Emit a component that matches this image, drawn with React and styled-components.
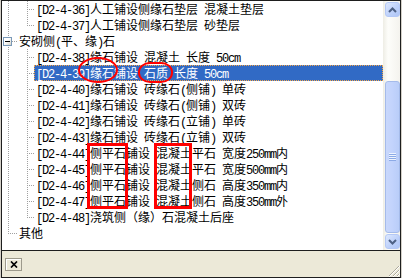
import React from "react";
import styled, { createGlobalStyle, css } from "styled-components";

const GlobalStyle = createGlobalStyle`
  html, body {
    margin: 0;
    padding: 0;
    background: #d4d0c8;
  }
  body {
    width: 402px;
    height: 278px;
    overflow: hidden;
  }
`;

const rows = [
  { guides: [{ v: "full" }, { v: "full", h: true }], text: "[D2-4-36]人工铺设侧缘石垫层 混凝土垫层" },
  { guides: [{ v: "full" }, { v: "end", h: true }], text: "[D2-4-37]人工铺设侧缘石垫层 砂垫层" },
  { guides: [{ v: "full", h: true, box: true }], text: "安砌侧(平、缘)石" },
  { guides: [{ v: "full" }, { v: "full", h: true }], text: "[D2-4-38]缘石铺设 混凝土 长度 50cm" },
  { guides: [{ v: "full" }, { v: "full", h: true }], text: "[D2-4-39]缘石铺设 石质 长度 50cm", selected: true },
  { guides: [{ v: "full" }, { v: "full", h: true }], text: "[D2-4-40]缘石铺设 砖缘石(侧铺) 单砖" },
  { guides: [{ v: "full" }, { v: "full", h: true }], text: "[D2-4-41]缘石铺设 砖缘石(侧铺) 双砖" },
  { guides: [{ v: "full" }, { v: "full", h: true }], text: "[D2-4-42]缘石铺设 砖缘石(立铺) 单砖" },
  { guides: [{ v: "full" }, { v: "full", h: true }], text: "[D2-4-43]缘石铺设 砖缘石(立铺) 双砖" },
  { guides: [{ v: "full" }, { v: "full", h: true }], text: "[D2-4-44]侧平石铺设 混凝土平石 宽度250mm内" },
  { guides: [{ v: "full" }, { v: "full", h: true }], text: "[D2-4-45]侧平石铺设 混凝土平石 宽度500mm内" },
  { guides: [{ v: "full" }, { v: "full", h: true }], text: "[D2-4-46]侧平石铺设 混凝土侧石 高度350mm内" },
  { guides: [{ v: "full" }, { v: "full", h: true }], text: "[D2-4-47]侧平石铺设 混凝土侧石 高度350mm外" },
  { guides: [{ v: "full" }, { v: "end", h: true }], text: "[D2-4-48]浇筑侧（缘）石混凝土后座" },
  { guides: [{ v: "end", h: true }], text: "其他" },
];

// guide column widths and where the dotted line sits inside them
const cols = [
  { w: 15, x: 6 },
  { w: 17, x: 10 },
];

const marks = [
  { x: 76, y: 56, w: 40, h: 26, round: "50%" },
  { x: 136, y: 61, w: 35, h: 21, round: "12px / 10px" },
  { x: 85, y: 142, w: 41, h: 66 },
  { x: 152, y: 142, w: 38, h: 66 },
];

const splitText = (text) =>
  text.split(/([\x20-\x7e]+)/).map((part, i) =>
    /[\x20-\x7e]/.test(part) ? <Latin key={i}>{part}</Latin> : part
  );

const App = () => {
  return (
    <React.Fragment>
      <GlobalStyle />
      <Frame>
        <ListArea>
          <Tree>
            {rows.map((row, i) => (
              <Row key={i}>
                {row.guides.map((g, j) => (
                  <Guide key={j} $w={cols[j].w} $x={cols[j].x} $v={g.v} $h={g.h}>
                    {g.box && <Expander />}
                  </Guide>
                ))}
                <Label $selected={row.selected}>{splitText(row.text)}</Label>
              </Row>
            ))}
            {marks.map((m, i) => (
              <Mark key={i} $x={m.x} $y={m.y} $w={m.w} $h={m.h} $round={m.round} />
            ))}
          </Tree>
          <ScrollBar>
            <ScrollButton>
              <ButtonFace>
                <svg width="9" height="6" viewBox="0 0 9 6">
                  <polyline points="1,5 4.5,1.5 8,5" fill="none" stroke="#4d6185" strokeWidth="2" />
                </svg>
              </ButtonFace>
            </ScrollButton>
            <Track>
              <Thumb style={{ height: 152 }}>
                <svg width="7" height="8" viewBox="0 0 7 8">
                  {[0, 2, 4, 6].map((y) => (
                    <rect key={y} x="0" y={y} width="7" height="1" fill="#eef4fe" />
                  ))}
                  {[1, 3, 5, 7].map((y) => (
                    <rect key={y} x="0" y={y} width="7" height="1" fill="#8caae6" />
                  ))}
                </svg>
              </Thumb>
            </Track>
            <ScrollButton>
              <ButtonFace>
                <svg width="9" height="6" viewBox="0 0 9 6">
                  <polyline points="1,1 4.5,4.5 8,1" fill="none" stroke="#4d6185" strokeWidth="2" />
                </svg>
              </ButtonFace>
            </ScrollButton>
          </ScrollBar>
        </ListArea>
        <Panel>
          <CloseButton>
            <svg width="8" height="7" viewBox="0 0 8 7">
              <path d="M1 0.5 L7 6.5 M7 0.5 L1 6.5" stroke="#000" strokeWidth="1.7" />
            </svg>
          </CloseButton>
          <Grip>
            <svg width="12" height="12" viewBox="0 0 12 12">
              <path d="M11 1 L1 11 M11 5 L5 11 M11 9 L9 11" stroke="#aca899" strokeWidth="1" />
              <path d="M12 1 L1 12 M12 5 L5 12 M12 9 L9 12" stroke="#fff" strokeWidth="1" />
            </svg>
          </Grip>
        </Panel>
      </Frame>
    </React.Fragment>
  );
};

const Frame = styled.div`
  margin-left: 1px;
  width: 400px;
  height: 278px;
  box-sizing: border-box;
  border: 1px solid #1e1e1e;
  display: flex;
  flex-direction: column;
  background: #ece9d8;
`;

const ListArea = styled.div`
  display: flex;
  height: 249px;
  flex: none;
  border-bottom: 1px solid #1e1e1e;
  background: #fff;
`;

const Tree = styled.div`
  position: relative;
  flex: 1;
  overflow: hidden;
  font-family: "Noto Sans CJK SC", sans-serif;
  font-size: 12px;
  color: #000;
`;

const Row = styled.div`
  display: flex;
  height: 16px;
`;

const Guide = styled.div`
  position: relative;
  flex: none;
  width: ${(p) => p.$w}px;

  &::before {
    content: "";
    display: ${(p) => (p.$v === "none" ? "none" : "block")};
    position: absolute;
    left: ${(p) => p.$x}px;
    top: 0;
    width: 1px;
    height: ${(p) => (p.$v === "end" ? "9px" : "16px")};
    background: repeating-linear-gradient(to bottom, #a0a0a0 0 1px, transparent 1px 2px);
  }

  &::after {
    content: "";
    display: ${(p) => (p.$h ? "block" : "none")};
    position: absolute;
    left: ${(p) => p.$x + 2}px;
    right: 0;
    top: 8px;
    height: 1px;
    background: repeating-linear-gradient(to right, #a0a0a0 0 1px, transparent 1px 2px);
  }
`;

const Expander = styled.div`
  position: absolute;
  left: 1px;
  top: 4px;
  width: 9px;
  height: 9px;
  box-sizing: border-box;
  border: 1px solid #7a99b8;
  background: linear-gradient(135deg, #fff 40%, #d6d3c6);
  z-index: 1;

  &::after {
    content: "";
    position: absolute;
    left: 1px;
    top: 3px;
    width: 5px;
    height: 1px;
    background: #000;
  }
`;

const Label = styled.div`
  box-sizing: border-box;
  height: 16px;
  line-height: 14px;
  padding: 0 1px;
  border: 1px solid transparent;
  white-space: pre;

  ${(p) =>
    p.$selected &&
    css`
      flex: 1;
      background: #316ac5;
      color: #fff;
      border: 1px dotted #f2a64b;
    `}
`;

const Latin = styled.span`
  font-family: "Liberation Mono", monospace;
  font-size: 12px;
  letter-spacing: -1.2px;
`;

const Mark = styled.div`
  position: absolute;
  left: ${(p) => p.$x}px;
  top: ${(p) => p.$y}px;
  width: ${(p) => p.$w}px;
  height: ${(p) => p.$h}px;
  box-sizing: border-box;
  border: ${(p) => (p.$round ? "2px" : "3px")} solid #ff0000;
  border-radius: ${(p) => p.$round || "0"};
  pointer-events: none;
`;

const ScrollBar = styled.div`
  width: 17px;
  flex: none;
  display: flex;
  flex-direction: column;
  background: linear-gradient(to right, #eeede5, #fdfdfa 30%, #f4f3ee);
`;

const ScrollButton = styled.div`
  height: 17px;
  flex: none;
  box-sizing: border-box;
  padding: 1px 0 1px 2px;
  display: flex;
`;

const ButtonFace = styled.div`
  flex: 1;
  border: 1px solid #b4c8f6;
  border-radius: 3px;
  background: linear-gradient(135deg, #dde8fe, #bcd0fa 60%, #b0c6f5);
  display: flex;
  align-items: center;
  justify-content: center;
`;

const Track = styled.div`
  flex: 1;
  display: flex;
  flex-direction: column;
  justify-content: flex-end;
  padding-left: 2px;
`;

const Thumb = styled.div`
  box-sizing: border-box;
  border: 1px solid #a5bbea;
  border-radius: 3px;
  background: linear-gradient(to right, #c9d8fc, #c2d3fc 50%, #b9cdf8);
  display: flex;
  align-items: center;
  justify-content: center;
`;

const Panel = styled.div`
  flex: 1;
  display: flex;
  align-items: flex-start;
  padding: 7px 0 0 3px;
`;

const CloseButton = styled.div`
  width: 17px;
  height: 13px;
  box-sizing: border-box;
  border: 1px solid #9d9a8c;
  box-shadow: inset 1px 1px 0 #fff;
  background: #ece9d8;
  display: flex;
  align-items: center;
  justify-content: center;
`;

const Grip = styled.div`
  margin-left: auto;
  align-self: flex-end;
  width: 12px;
  height: 12px;
  display: flex;
`;

export default App;
